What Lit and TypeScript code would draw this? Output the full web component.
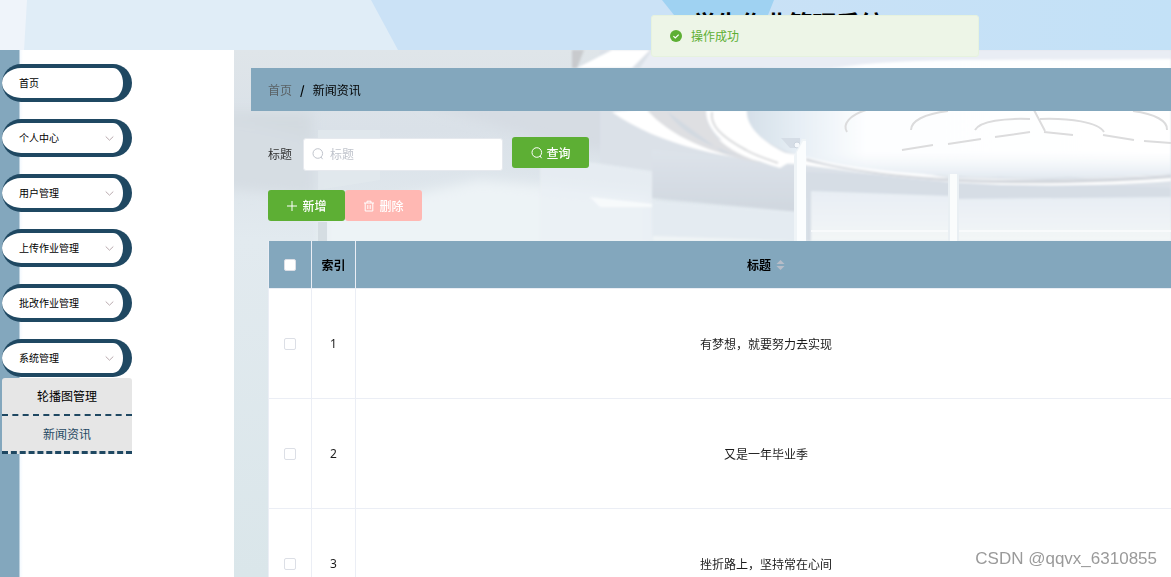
import { LitElement, html, css, svg } from "lit";
import { customElement, state } from "lit/decorators.js";

interface MenuEntry {
  label: string;
  expandable: boolean;
}

const MENU: MenuEntry[] = [
  { label: "首页", expandable: false },
  { label: "个人中心", expandable: true },
  { label: "用户管理", expandable: true },
  { label: "上传作业管理", expandable: true },
  { label: "批改作业管理", expandable: true },
  { label: "系统管理", expandable: true },
];

const ROWS = ["有梦想，就要努力去实现", "又是一年毕业季", "挫折路上，坚持常在心间"];

const headerArt = svg`
  <svg class="art" viewBox="0 0 1171 50" preserveAspectRatio="none" aria-hidden="true">
    <defs>
      <linearGradient id="hr" x1="0" x2="1"><stop offset="0" stop-color="#c9e1f6"/><stop offset="1" stop-color="#c3e1f7"/></linearGradient>
    </defs>
    <rect width="1171" height="50" fill="#e0edf7"/>
    <path d="M0 0H27L24 50H0Z" fill="#eff4fa"/>
    <path d="M371 0H1171V50H398Z" fill="#cbe2f6"/>
    <path d="M773 0H1171V50H750Z" fill="url(#hr)"/>
    <path d="M662 0H774L754 50H702Z" fill="#9fd2f2"/>
  </svg>`;

const hallArt = svg`
  <svg class="art" viewBox="234 50 937 527" preserveAspectRatio="xMidYMin slice" aria-hidden="true">
    <defs>
      <linearGradient id="wall" x1="0" y1="0" x2="0" y2="1">
        <stop offset="0" stop-color="#dfe5e9"/><stop offset=".15" stop-color="#dae1e8"/>
        <stop offset=".36" stop-color="#e2eaef"/><stop offset="1" stop-color="#dae6ea"/>
      </linearGradient>
      <linearGradient id="dusk" x1="0" y1="0" x2="0" y2="1">
        <stop offset="0" stop-color="#dde3ea"/><stop offset="1" stop-color="#d0d7df"/>
      </linearGradient>
      <linearGradient id="glass" x1="0" y1="0" x2="0" y2="1">
        <stop offset="0" stop-color="#e8eef4"/><stop offset="1" stop-color="#f3f6f7"/>
      </linearGradient>
      <linearGradient id="dome" x1="0" x2="1">
        <stop offset="0" stop-color="#d5dfe8"/><stop offset=".12" stop-color="#e6eef5"/>
        <stop offset=".28" stop-color="#fdfeff"/><stop offset="1" stop-color="#fff"/>
      </linearGradient>
      <linearGradient id="domefoot" x1="0" y1="0" x2="0" y2="1">
        <stop offset=".8" stop-color="#eef3f8" stop-opacity="0"/><stop offset="1" stop-color="#e3eaf1"/>
      </linearGradient>
      <filter id="soft"><feGaussianBlur stdDeviation=".8"/></filter>
      <filter id="haze" x="-20%" y="-20%" width="140%" height="140%"><feGaussianBlur stdDeviation="6"/></filter>
    </defs>
    <rect x="234" y="50" width="937" height="527" fill="url(#wall)"/>
    <g filter="url(#haze)">
      <path d="M220 112H312V140L220 116Z" fill="#d3dae0"/>
      <path d="M220 116L316 140V196L220 188Z" fill="#d6dde3"/>
      <path d="M420 104H640L660 160L560 145Z" fill="#d6dce3"/>
      <path d="M322 215L480 180L652 196V260H322Z" fill="#edf3f6"/>
    </g>
    <path d="M318 130H380V180L318 190Z" fill="#e2e9ee" opacity=".7"/>
    <path d="M318 222H327V241H318Z" fill="#d5dde2"/>
    <g filter="url(#soft)">
      <path d="M600 50H1171V200H796L600 164Z" fill="#dbe1e8"/>
      <path d="M652 150L800 165V212L652 198Z" fill="url(#dusk)"/>
      <path d="M540 155L652 171V241H540Z" fill="#e9f0f5" opacity=".7"/>
      <path d="M590 197L652 204V207H600Z" fill="#f7fafb"/>
      <path d="M653 201L796 212V241H653Z" fill="#e4ebf1"/>
      <path d="M653 236L796 241H653Z" fill="#f0f4f6"/>
      <path d="M806 172L1171 188V241H806Z" fill="#d6dde5"/>
      <path d="M811 191L950 196V241H811Z" fill="url(#glass)"/>
      <path d="M957 199L1171 197V241H957Z" fill="url(#glass)"/>
      <path d="M572 50H584L577 68H572Z" fill="#c8cacd"/>
      <path d="M577 68L612 50H650L632 68Z" fill="#fff"/>
      <path d="M612 112C660 146 730 160 796 164C840 169 910 181 985 184C1050 187 1120 185 1171 181V175L1050 180L950 178L806 156L752 148L690 132L647 108Z" fill="#fff"/>
      <path d="M647 110H706C706 132 722 150 765 164C710 154 670 136 647 110Z" fill="#dedfe2"/>
      <path d="M668 112C680 132 710 150 765 162L722 152Z" fill="#d2d9e1"/>
      <path d="M706 110H748C747 130 766 145 796 158L780 168C735 155 706 135 706 110Z" fill="#fff"/>
      <path d="M712 112C710 125 720 136 746 150C756 156 770 160 778 163" fill="none" stroke="#d8d9db" stroke-width="2"/>
      <path d="M806 158C850 172 930 180 1010 180C1070 180 1130 178 1171 175V178C1120 182 1060 184 1000 183C920 182 850 172 806 161Z" fill="#d2d6dc"/>
      <path id="bowl" d="M747 108C744 130 770 148 806 157C860 171 930 176 1000 177C1070 178 1130 176 1171 174V50H770Z" fill="url(#dome)"/>
      <path d="M747 108C744 130 770 148 806 157C860 171 930 176 1000 177C1070 178 1130 176 1171 174V50H770Z" fill="url(#domefoot)"/>
      <path d="M652 50H1171V59L980 60C900 60 860 64 830 68H640Z" fill="#e9edf4"/>
    </g>
    <g fill="none" stroke="#dcdcdd" stroke-width="2">
      <path d="M847 132C842 124 850 115 866 110"/>
      <path d="M911 130C911 121 924 114 948 111"/>
      <path d="M975 130C980 121 1005 118 1030 119"/>
      <path d="M1034 110L1045 131M1040 119C1070 118 1098 122 1104 132"/>
      <path d="M1133 111C1155 114 1168 121 1167 130"/>
      <path d="M902 150L933 145M948 144L981 139M995 137L1030 132M1044 132L1073 135M1103 135L1134 140M1144 141L1171 143"/>
    </g>
    <path d="M781 138H800V148H790Z" fill="#d5dde6"/>
    <circle cx="797" cy="145" r="3" fill="#f6f9fc" stroke="#ccd5df"/>
    <path d="M794 156L802 139H806V241H794Z" fill="#eff4f7"/>
    <path d="M797 152L803 141H806V241H797Z" fill="#fbfdfe"/>
    <path d="M948 174H959V241H948Z" fill="#e9eff3"/>
    <path d="M950 174H957V241H950Z" fill="#fafcfc"/>
    <path d="M811 231H948M959 231H1171" stroke="#f8fafb" stroke-width="2"/>
  </svg>`;

const searchIcon = html`<svg class="icon" viewBox="0 0 12 12" aria-hidden="true">
  <circle cx="5.8" cy="5.5" r="4.8"/><path d="M9 9L10.6 11.2"/></svg>`;

@customElement("app-root")
export class AppRoot extends LitElement {
  static styles = css`
    :host {
      display: block;
      position: relative;
      height: 100vh;
      overflow: hidden;
      font: 12px/16px "Noto Sans CJK SC", "Noto Sans", sans-serif;
      color: #1c1c1c;
      background: #fff;
    }
    *, *::before { box-sizing: border-box; }
    button, input { font: inherit; }
    .page { display: flex; flex-direction: column; height: 100%; }
    .art { position: absolute; inset: 0; width: 100%; height: 100%; z-index: -1; }
    .header {
      position: relative;
      z-index: 0;
      flex: none;
      display: flex;
      justify-content: center;
      height: 50px;
      padding-left: 406px;
    }
    .title { margin: 0; font-size: 24px; line-height: 46px; font-weight: 700; color: #000; }
    .body { flex: 1; display: flex; min-height: 0; }
    .sidebar { flex: none; width: 234px; padding: 14px 0 0 2px; background: linear-gradient(90deg, #83a7bd 19px, #f4f9fe 20px, #fff 23px); }
    .menu { display: flex; flex-direction: column; gap: 17px; width: 130px; margin: 0; padding: 0; list-style: none; }
    .entry {
      display: flex;
      align-items: center;
      justify-content: space-between;
      width: 100%;
      height: 38px;
      padding: 0 9px 0 17px;
      border: solid #1f4862;
      border-width: 4px 9px 4px 0;
      border-radius: 20px;
      background: #fff;
      color: #000;
      font-size: 10px;
      text-align: left;
    }
    .chevron { width: 9px; height: 9px; fill: none; stroke: #b9a9ad; }
    .submenu { margin-top: 1px; }
    .sublink {
      display: flex;
      align-items: center;
      justify-content: center;
      height: 38px;
      border-bottom: 2px dashed #1f4862;
      border-radius: 3px 3px 0 0;
      background: #e6e6e6;
      color: #000;
      text-decoration: none;
    }
    .sublink.current { border-bottom-width: 3px; border-radius: 0; color: #1f4862; }
    .main { position: relative; z-index: 0; flex: 1; min-width: 0; padding: 18px 0 0 17px; overflow: hidden; }
    .crumbs { display: flex; align-items: center; gap: 8px; height: 43px; padding-left: 17px; background: #83a7bd; color: #000; }
    .crumbs a { color: #5a6266; text-decoration: none; }
    .crumbs .slash { font-weight: 700; }
    .content { padding: 26px 0 0 17px; }
    .search { display: flex; align-items: center; height: 34px; }
    .search label { margin-right: 11px; color: #333; }
    .field { display: flex; align-items: center; gap: 6px; width: 200px; height: 33px; padding: 0 8px; border-radius: 3px; background: #fff; border: 1px solid #e6e9ee; color: #c0c4cc; }
    .field input { flex: 1; min-width: 0; padding: 0; border: 0; outline: 0; background: none; color: #333; }
    .field input::placeholder { color: #c0c4cc; opacity: 1; }
    .icon { flex: none; width: 12px; height: 12px; fill: none; stroke: currentColor; }
    .button { display: flex; align-items: center; justify-content: center; gap: 4px; width: 77px; height: 31px; padding: 0; border: 0; border-radius: 3px; background: #5daf34; color: #fff; font-weight: 500; }
    .search .button { align-self: flex-start; margin-left: 9px; }
    .actions { display: flex; margin: 19px 0 20px; }
    .button:disabled { background: #ffb8b3; color: #fff; }
    .table { width: calc(100% + 6px); border-collapse: separate; border-spacing: 0; table-layout: fixed; background: #fff; border-left: 1px solid #ebeef5; }
    .table th, .table td { padding: 0; text-align: center; border: solid #ebeef5; border-width: 0 1px 1px 0; }
    .table th { height: 48px; background: #83a7bd; color: #000; font-weight: 700; }
    .table td { height: 110px; }
    .table .index { font-family: "Noto Sans", sans-serif; }
    .pick { width: 43px; }
    .number { width: 44px; }
    .tick { appearance: none; display: block; width: 12px; height: 12px; margin: 0 auto; border: 1px solid #dcdfe6; border-radius: 2px; background: #fff; }
    .tick:checked { background: #5daf34; border-color: #5daf34; }
    .sort { display: inline-flex; align-items: center; gap: 5px; padding: 0; border: 0; background: none; color: inherit; font-weight: 700; }
    .carets { width: 9px; height: 12px; fill: #b7bdc8; }
    .toast {
      position: absolute;
      top: 15px;
      left: 651px;
      z-index: 2;
      display: flex;
      align-items: center;
      gap: 9px;
      width: 328px;
      height: 42px;
      padding-left: 18px;
      border: 1px solid #e6f2de;
      border-radius: 3px;
      background: #edf5e7;
      color: #5daf34;
    }
    .done { width: 12px; height: 12px; }
    .watermark { position: absolute; right: 14px; bottom: 6px; z-index: 2; font: 17px/24px "Liberation Sans", sans-serif; color: #9a9a9a; }
  `;

  @state() private picked = new Set<number>();

  private toggle(index: number) {
    const next = new Set(this.picked);
    next.has(index) ? next.delete(index) : next.add(index);
    this.picked = next;
  }

  private toggleAll() {
    this.picked = this.picked.size === ROWS.length ? new Set() : new Set(ROWS.keys());
  }

  render() {
    return html`
      <div class="page">
        <header class="header">${headerArt}<h1 class="title">学生作业管理系统</h1></header>
        <div class="body">
          <nav class="sidebar">
            <ul class="menu">
              ${MENU.map((m) => html`<li><button class="entry" type="button">${m.label}
                ${m.expandable ? html`<svg class="chevron" viewBox="0 0 9 9" aria-hidden="true"><path d="M.7 2.5L4.5 6.2L8.3 2.5"/></svg>` : ""}
              </button></li>`)}
            </ul>
            <ul class="menu submenu">
              <li>
                <a class="sublink" href="#carousel">轮播图管理</a>
                <a class="sublink current" href="#news">新闻资讯</a>
              </li>
            </ul>
          </nav>
          <main class="main">
            ${hallArt}
            <nav class="crumbs"><a href="#home">首页</a><span class="slash">/</span><span>新闻资讯</span></nav>
            <div class="content">
              <form class="search" @submit=${(e: Event) => e.preventDefault()}>
                <label for="query">标题</label>
                <div class="field">${searchIcon}<input id="query" type="text" placeholder="标题"></div>
                <button class="button" type="submit">${searchIcon}查询</button>
              </form>
              <div class="actions">
                <button class="button" type="button">
                  <svg class="icon" viewBox="0 0 12 12" aria-hidden="true"><path d="M6 1V11M1 6H11"/></svg>新增
                </button>
                <button class="button" type="button" ?disabled=${this.picked.size === 0}>
                  <svg class="icon" viewBox="0 0 12 12" aria-hidden="true"><path d="M1 3H11M4 3V1.2H8V3M2.2 3V11H9.8V3M4.8 5V9M7.2 5V9"/></svg>删除
                </button>
              </div>
              <table class="table">
                <thead>
                  <tr>
                    <th class="pick"><input class="tick" type="checkbox" aria-label="全选" @change=${this.toggleAll}></th>
                    <th class="number">索引</th>
                    <th><button class="sort" type="button">标题<svg class="carets" viewBox="0 0 9 12" aria-hidden="true"><path d="M4.5 1L8.5 5H.5ZM4.5 11L.5 7H8.5Z"/></svg></button></th>
                  </tr>
                </thead>
                <tbody>
                  ${ROWS.map((title, i) => html`<tr>
                    <td><input class="tick" type="checkbox" aria-label=${title} .checked=${this.picked.has(i)} @change=${() => this.toggle(i)}></td>
                    <td class="index">${i + 1}</td>
                    <td>${title}</td>
                  </tr>`)}
                </tbody>
              </table>
            </div>
          </main>
        </div>
      </div>
      <div class="toast" role="status">
        <svg class="done" viewBox="0 0 12 12" aria-hidden="true"><circle cx="6" cy="6" r="6" fill="#5daf34"/><path d="M3.4 6.1L5.3 8L8.7 4.6" fill="none" stroke="#fff" stroke-width="1.2"/></svg>
        操作成功
      </div>
      <div class="watermark">CSDN @qqvx_6310855</div>
    `;
  }
}
